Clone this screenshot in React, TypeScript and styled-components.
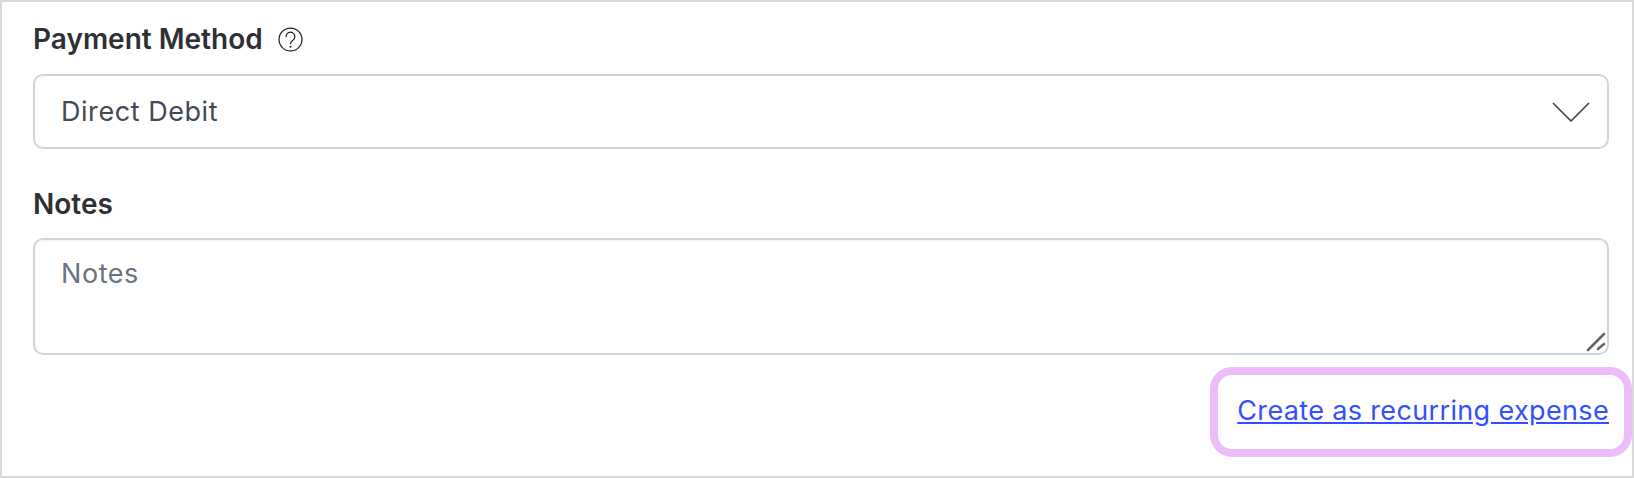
import React from "react";
import styled, { createGlobalStyle } from "styled-components";

const Global = createGlobalStyle`
  html, body { margin: 0; padding: 0; background: #fff; }
  body { font-family: Inter, "Liberation Sans", sans-serif; }
  * { box-sizing: border-box; }
`;

const Frame = styled.div`
  width: 1634px;
  height: 478px;
  border: 2px solid #d9d9d9;
  padding: 22px 23px 0 31px;
  display: flex;
  flex-direction: column;
  overflow: hidden;
  background: #fff;
`;

const LabelRow = styled.div`
  display: flex;
  align-items: center;
  gap: 15px;
  height: 30px;
`;

const Label = styled.label`
  font-size: 28px;
  font-weight: 600;
  line-height: 30px;
  color: #2f3033;
`;

const HelpIcon = styled.svg`
  width: 25px;
  height: 25px;
  display: block;
`;

const Select = styled.div`
  margin-top: 20px;
  height: 75px;
  border: 2px solid #d1d5db;
  border-radius: 10px;
  padding: 0 17px 0 26px;
  display: flex;
  align-items: center;
  justify-content: space-between;
  font-size: 27px;
  letter-spacing: 0.55px;
  color: #434a54;
`;

const Chevron = styled.svg`
  width: 38px;
  height: 20px;
  display: block;
`;

const NotesLabel = styled(Label)`
  margin-top: 40px;
  display: block;
`;

const NotesField = styled.div`
  position: relative;
  margin-top: 19px;
`;

const TextArea = styled.textarea`
  display: block;
  width: 100%;
  height: 117px;
  border: 2px solid #d1d5db;
  border-radius: 10px;
  padding: 16px 26px;
  font-family: inherit;
  font-size: 27px;
  letter-spacing: 0.55px;
  line-height: 36px;
  color: #434a54;
  outline: none;
  resize: none;
  box-shadow: inset 0 1px 2px rgba(0, 0, 0, 0.06);
  &::placeholder { color: #6b7280; opacity: 1; }
`;

const ResizeGrip = styled.svg`
  position: absolute;
  right: 3px;
  bottom: 3px;
  width: 20px;
  height: 20px;
  pointer-events: none;
`;

const Footer = styled.div`
  display: flex;
  justify-content: flex-end;
  margin: 12px -23px 0 0;
`;

const Highlight = styled.div`
  width: 422px;
  height: 90px;
  border: 8px solid #ecbdf9;
  border-radius: 22px;
  padding: 0 15px 4px 19px;
  display: flex;
  align-items: center;
  justify-content: flex-end;
  background: #fff;
`;

const Link = styled.a`
  font-size: 27px;
  letter-spacing: 0.35px;
  color: #3350ff;
  text-decoration: underline;
  white-space: nowrap;
  cursor: pointer;
`;

export default function App() {
  return (
    <>
      <Global />
      <Frame>
        <LabelRow>
          <Label>Payment Method</Label>
          <HelpIcon viewBox="0 0 24 24" fill="none" stroke="#1f2024" strokeWidth="1.2" strokeLinecap="round">
            <circle cx="12" cy="12" r="11" />
            <path d="M7.8 9.2a4.2 4.2 0 1 1 6.5 3.5c-1.5 1-2.3 1.7-2.3 3.3" />
            <circle cx="12" cy="19" r="0.4" />
          </HelpIcon>
        </LabelRow>
        <Select>
          <span>Direct Debit</span>
          <Chevron viewBox="0 0 38 20" fill="none" stroke="#3a4250" strokeWidth="1.6">
            <path d="M1 1l18 18L37 1" />
          </Chevron>
        </Select>
        <NotesLabel>Notes</NotesLabel>
        <NotesField>
          <TextArea placeholder="Notes" />
          <ResizeGrip viewBox="0 0 20 20" fill="none" stroke="#666" strokeWidth="2.6" strokeLinecap="round">
            <path d="M2 18L18 2" />
            <path d="M12 17l6-5" />
          </ResizeGrip>
        </NotesField>
        <Footer>
          <Highlight>
            <Link>Create as recurring expense</Link>
          </Highlight>
        </Footer>
      </Frame>
    </>
  );
}
